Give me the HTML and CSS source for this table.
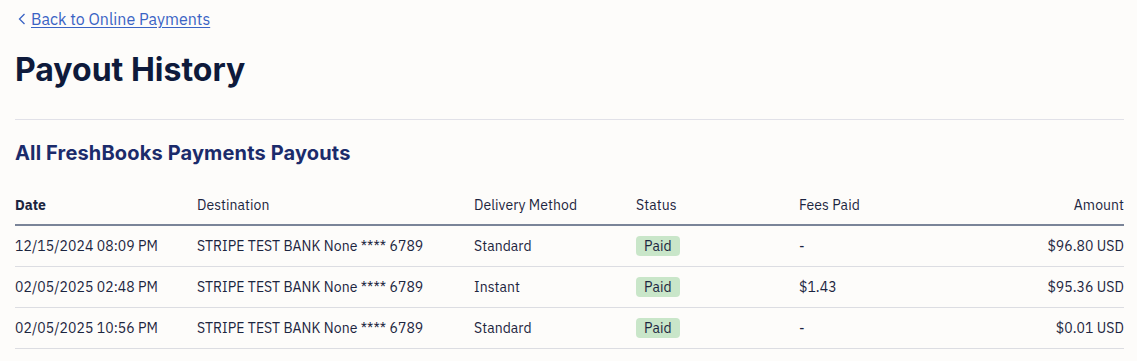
FILE: index.html
```html
<!DOCTYPE html>
<html>
<head>
<meta charset="utf-8">
<link rel="stylesheet" href="styles.css">
</head>
<body>
<div class="page">
  <a class="back" href="#">
    <svg class="chev" width="8" height="12" viewBox="0 0 8 12"><path d="M6.5 1 L1.5 6 L6.5 11" fill="none" stroke="#3a63c4" stroke-width="1.3"/></svg>
    <span class="back-text">Back to Online Payments</span>
  </a>
  <h1 class="title">Payout History</h1>
  <hr class="rule">
  <h2 class="section">All FreshBooks Payments Payouts</h2>
  <table class="payouts">
    <thead>
      <tr>
        <th class="c-date">Date</th>
        <th class="c-dest">Destination</th>
        <th class="c-del">Delivery Method</th>
        <th class="c-stat">Status</th>
        <th class="c-fee">Fees Paid</th>
        <th class="c-amt">Amount</th>
      </tr>
    </thead>
    <tbody>
      <tr>
        <td>12/15/2024 08:09 PM</td>
        <td>STRIPE TEST BANK None **** 6789</td>
        <td>Standard</td>
        <td><span class="badge">Paid</span></td>
        <td>-</td>
        <td class="c-amt">$96.80 USD</td>
      </tr>
      <tr>
        <td>02/05/2025 02:48 PM</td>
        <td>STRIPE TEST BANK None **** 6789</td>
        <td>Instant</td>
        <td><span class="badge">Paid</span></td>
        <td>$1.43</td>
        <td class="c-amt">$95.36 USD</td>
      </tr>
      <tr>
        <td>02/05/2025 10:56 PM</td>
        <td>STRIPE TEST BANK None **** 6789</td>
        <td>Standard</td>
        <td><span class="badge">Paid</span></td>
        <td>-</td>
        <td class="c-amt">$0.01 USD</td>
      </tr>
    </tbody>
  </table>
</div>
</body>
</html>
```

FILE: styles.css
```css
html, body {
  margin: 0;
  padding: 0;
  background: #fdfcfa;
}
body {
  font-family: "IBM Plex Sans", "Noto Sans", "Liberation Sans", sans-serif;
  color: #1c2540;
}
.page {
  padding: 8px 13px 0 15px;
}
.back {
  display: inline-flex;
  align-items: center;
  gap: 5px;
  text-decoration: none;
  color: #3a63c4;
  font-size: 16px;
  line-height: 22px;
  padding-left: 3px;
}
.back-text {
  text-decoration: underline;
  text-underline-offset: 2px;
}
.chev { display: block; }
.title {
  margin: 20px 0 0 0;
  font-family: Inter, "Liberation Sans", sans-serif;
  font-size: 32px;
  line-height: 40px;
  font-weight: 700;
  letter-spacing: 0;
  color: #0e1a3b;
}
.rule {
  margin: 29px 0 0 0;
  border: 0;
  border-top: 1px solid #e1e1e8;
  height: 0;
}
.section {
  margin: 20px 0 0 0;
  font-family: Inter, "Liberation Sans", sans-serif;
  font-size: 20px;
  line-height: 26px;
  font-weight: 700;
  letter-spacing: 0.15px;
  color: #1b2b6b;
}
.payouts {
  margin-top: 19px;
  width: 100%;
  border-collapse: collapse;
  font-size: 14px;
  letter-spacing: 0.05px;
}
.payouts th {
  text-align: left;
  font-weight: 400;
  height: 39px;
  padding: 0;
  border-bottom: 2px solid #7a8498;
  vertical-align: middle;
  color: #1c2540;
}
.payouts th.c-date { font-weight: 700; width: 182px; }
.payouts th.c-dest { width: 277px; }
.payouts th.c-del { width: 162px; }
.payouts th.c-stat { width: 163px; }
.payouts .c-amt { text-align: right; }
.payouts td {
  height: 40px;
  padding: 0;
  border-bottom: 1px solid #dcdde2;
  vertical-align: middle;
}
.badge {
  display: inline-block;
  background: #c9e6c9;
  border-radius: 4px;
  padding: 0 8px;
  line-height: 20px;
  color: #1c2540;
}
```
